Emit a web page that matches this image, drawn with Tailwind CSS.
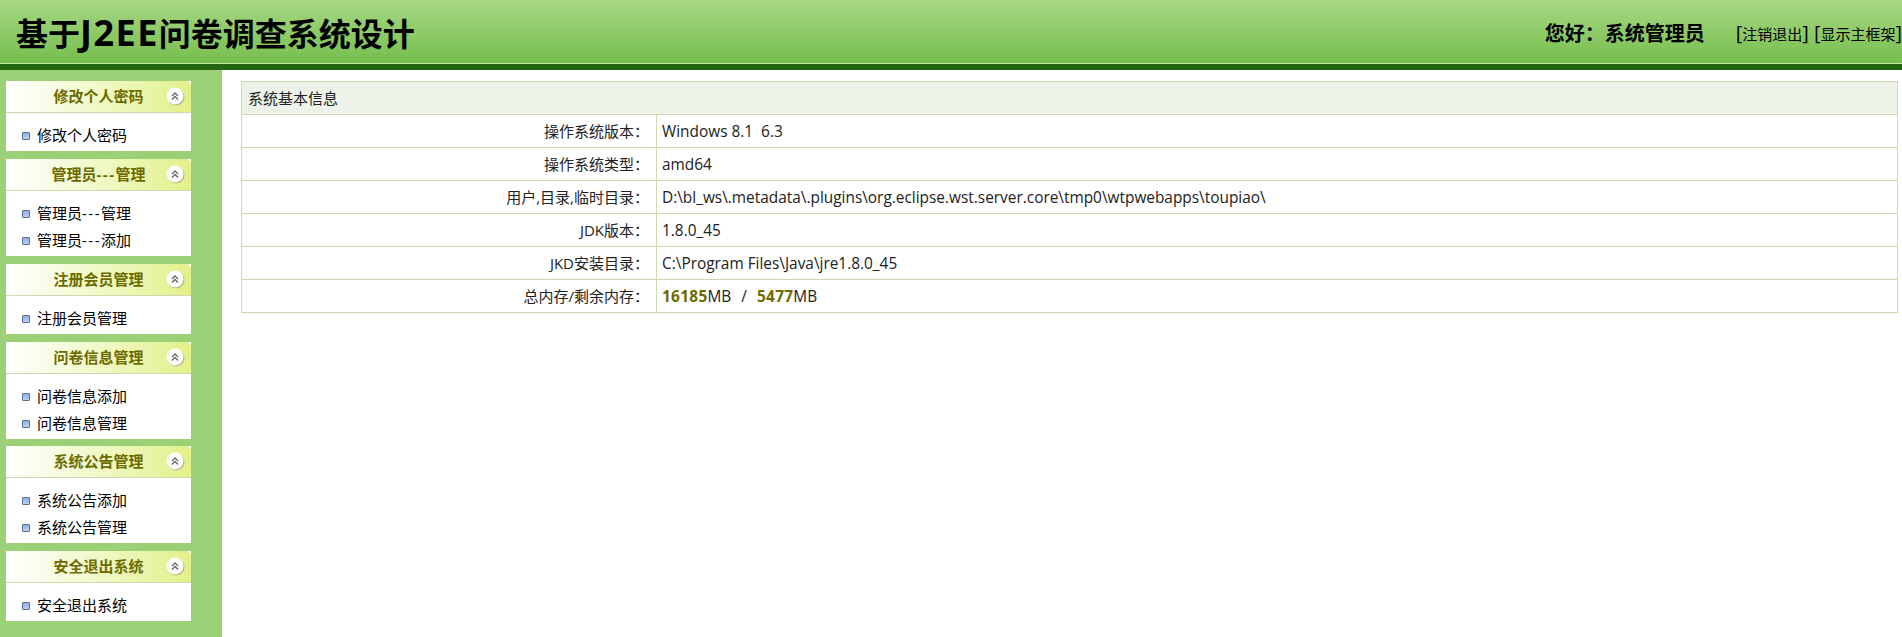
<!DOCTYPE html>
<html lang="zh-CN">
<head>
    <meta charset="UTF-8">
    <title>基于J2EE问卷调查系统设计</title>
    <script src="https://cdn.jsdelivr.net/npm/@tailwindcss/browser@4"></script>
</head>
<body class="h-[637px] overflow-hidden bg-white text-black font-['Open_Sans','Noto_Sans_CJK_SC',sans-serif]">
    <!-- 顶部 -->
    <header class="h-[70px] bg-gradient-to-b from-[#a6d782] to-[#76be4d] border-b-[6px] border-[#22640f] flex justify-between items-start relative">
        <h1 class="ml-4 mt-[9px] text-[32px] leading-[48px] font-bold whitespace-nowrap">基于<span class="text-[36px] tracking-[1.5px]">J2EE</span>问卷调查系统设计</h1>
        <div class="flex items-center mt-[19px]">
            <span class="text-[20px] leading-[28px] font-bold mr-[31px]">您好：系统管理员</span>
            <span class="text-[15px] leading-[28px] whitespace-nowrap"><span class="text-[20px]">[</span>注销退出<span class="text-[20px]">]</span><span class="ml-[5px] text-[20px]">[</span>显示主框架<span class="text-[20px]">]</span></span>
        </div>
        <div class="absolute left-0 right-0 bottom-0 h-[1px] bg-[#bfe6a0]"></div>
    </header>

    <div class="flex h-[567px]">
        <!-- 左侧菜单 -->
        <aside class="w-[222px] h-full bg-[#9cd076] pt-[11px] pl-[6px] flex flex-col">
            <div class="w-[185px] bg-white">
                <div class="h-[32px] rounded-t-[5px] border-b border-[#d0d8b0] bg-gradient-to-r from-white to-[#e3f088] relative flex items-center justify-center text-[15px] font-bold text-[#6b6b00]">
                    修改个人密码
                    <svg class="absolute right-[6px] top-[6px]" width="19" height="19" viewBox="0 0 19 19"><circle cx="10" cy="10" r="8.5" fill="#888" opacity=".55"/><circle cx="9" cy="9" r="8.5" fill="#fff"/><path d="M6 9 9 6 12 9M6 12.5 9 9.5 12 12.5" fill="none" stroke="#666" stroke-width="1.3"/></svg>
                </div>
                <ul class="pt-[9px] pb-[2px] text-[15px] leading-[27px]">
                    <li class="flex items-center pl-[16px]"><span class="w-[8px] h-[8px] rounded-[1px] border border-[#5f6f8a] bg-gradient-to-b from-[#8fb0ea] to-[#b8d0f8] mr-[7px]"></span>修改个人密码</li>
                </ul>
            </div>
            <div class="w-[185px] bg-white mt-[8px]">
                <div class="h-[32px] rounded-t-[5px] border-b border-[#d0d8b0] bg-gradient-to-r from-white to-[#e3f088] relative flex items-center justify-center text-[15px] font-bold text-[#6b6b00]">
                    <span>管理员<span class="tracking-[1.5px]">---</span>管理</span>
                    <svg class="absolute right-[6px] top-[6px]" width="19" height="19" viewBox="0 0 19 19"><circle cx="10" cy="10" r="8.5" fill="#888" opacity=".55"/><circle cx="9" cy="9" r="8.5" fill="#fff"/><path d="M6 9 9 6 12 9M6 12.5 9 9.5 12 12.5" fill="none" stroke="#666" stroke-width="1.3"/></svg>
                </div>
                <ul class="pt-[9px] pb-[2px] text-[15px] leading-[27px]">
                    <li class="flex items-center pl-[16px]"><span class="w-[8px] h-[8px] rounded-[1px] border border-[#5f6f8a] bg-gradient-to-b from-[#8fb0ea] to-[#b8d0f8] mr-[7px]"></span><span>管理员<span class="tracking-[1.5px]">---</span>管理</span></li>
                    <li class="flex items-center pl-[16px]"><span class="w-[8px] h-[8px] rounded-[1px] border border-[#5f6f8a] bg-gradient-to-b from-[#8fb0ea] to-[#b8d0f8] mr-[7px]"></span><span>管理员<span class="tracking-[1.5px]">---</span>添加</span></li>
                </ul>
            </div>
            <div class="w-[185px] bg-white mt-[8px]">
                <div class="h-[32px] rounded-t-[5px] border-b border-[#d0d8b0] bg-gradient-to-r from-white to-[#e3f088] relative flex items-center justify-center text-[15px] font-bold text-[#6b6b00]">
                    注册会员管理
                    <svg class="absolute right-[6px] top-[6px]" width="19" height="19" viewBox="0 0 19 19"><circle cx="10" cy="10" r="8.5" fill="#888" opacity=".55"/><circle cx="9" cy="9" r="8.5" fill="#fff"/><path d="M6 9 9 6 12 9M6 12.5 9 9.5 12 12.5" fill="none" stroke="#666" stroke-width="1.3"/></svg>
                </div>
                <ul class="pt-[9px] pb-[2px] text-[15px] leading-[27px]">
                    <li class="flex items-center pl-[16px]"><span class="w-[8px] h-[8px] rounded-[1px] border border-[#5f6f8a] bg-gradient-to-b from-[#8fb0ea] to-[#b8d0f8] mr-[7px]"></span>注册会员管理</li>
                </ul>
            </div>
            <div class="w-[185px] bg-white mt-[8px]">
                <div class="h-[32px] rounded-t-[5px] border-b border-[#d0d8b0] bg-gradient-to-r from-white to-[#e3f088] relative flex items-center justify-center text-[15px] font-bold text-[#6b6b00]">
                    问卷信息管理
                    <svg class="absolute right-[6px] top-[6px]" width="19" height="19" viewBox="0 0 19 19"><circle cx="10" cy="10" r="8.5" fill="#888" opacity=".55"/><circle cx="9" cy="9" r="8.5" fill="#fff"/><path d="M6 9 9 6 12 9M6 12.5 9 9.5 12 12.5" fill="none" stroke="#666" stroke-width="1.3"/></svg>
                </div>
                <ul class="pt-[9px] pb-[2px] text-[15px] leading-[27px]">
                    <li class="flex items-center pl-[16px]"><span class="w-[8px] h-[8px] rounded-[1px] border border-[#5f6f8a] bg-gradient-to-b from-[#8fb0ea] to-[#b8d0f8] mr-[7px]"></span>问卷信息添加</li>
                    <li class="flex items-center pl-[16px]"><span class="w-[8px] h-[8px] rounded-[1px] border border-[#5f6f8a] bg-gradient-to-b from-[#8fb0ea] to-[#b8d0f8] mr-[7px]"></span>问卷信息管理</li>
                </ul>
            </div>
            <div class="w-[185px] bg-white mt-[7px]">
                <div class="h-[32px] rounded-t-[5px] border-b border-[#d0d8b0] bg-gradient-to-r from-white to-[#e3f088] relative flex items-center justify-center text-[15px] font-bold text-[#6b6b00]">
                    系统公告管理
                    <svg class="absolute right-[6px] top-[6px]" width="19" height="19" viewBox="0 0 19 19"><circle cx="10" cy="10" r="8.5" fill="#888" opacity=".55"/><circle cx="9" cy="9" r="8.5" fill="#fff"/><path d="M6 9 9 6 12 9M6 12.5 9 9.5 12 12.5" fill="none" stroke="#666" stroke-width="1.3"/></svg>
                </div>
                <ul class="pt-[9px] pb-[2px] text-[15px] leading-[27px]">
                    <li class="flex items-center pl-[16px]"><span class="w-[8px] h-[8px] rounded-[1px] border border-[#5f6f8a] bg-gradient-to-b from-[#8fb0ea] to-[#b8d0f8] mr-[7px]"></span>系统公告添加</li>
                    <li class="flex items-center pl-[16px]"><span class="w-[8px] h-[8px] rounded-[1px] border border-[#5f6f8a] bg-gradient-to-b from-[#8fb0ea] to-[#b8d0f8] mr-[7px]"></span>系统公告管理</li>
                </ul>
            </div>
            <div class="w-[185px] bg-white mt-[8px]">
                <div class="h-[32px] rounded-t-[5px] border-b border-[#d0d8b0] bg-gradient-to-r from-white to-[#e3f088] relative flex items-center justify-center text-[15px] font-bold text-[#6b6b00]">
                    安全退出系统
                    <svg class="absolute right-[6px] top-[6px]" width="19" height="19" viewBox="0 0 19 19"><circle cx="10" cy="10" r="8.5" fill="#888" opacity=".55"/><circle cx="9" cy="9" r="8.5" fill="#fff"/><path d="M6 9 9 6 12 9M6 12.5 9 9.5 12 12.5" fill="none" stroke="#666" stroke-width="1.3"/></svg>
                </div>
                <ul class="pt-[9px] pb-[2px] text-[15px] leading-[27px]">
                    <li class="flex items-center pl-[16px]"><span class="w-[8px] h-[8px] rounded-[1px] border border-[#5f6f8a] bg-gradient-to-b from-[#8fb0ea] to-[#b8d0f8] mr-[7px]"></span>安全退出系统</li>
                </ul>
            </div>
        </aside>

        <!-- 系统基本信息 -->
        <main class="flex-1 pt-[11px] pl-[19px] pr-[4px]">
            <table class="w-full border-collapse text-[15px] text-[#222]">
                <tbody>
                    <tr class="h-[33px]"><th colspan="2" class="border border-[#cfd8b0] bg-[#eef3e9] text-left font-normal pl-[6px]">系统基本信息</th></tr>
                    <tr class="h-[33px]"><td class="w-[415px] border border-[#cfd8b0] text-right pr-[7px]">操作系统版本：</td><td class="border border-[#cfd8b0] pl-[5px] pt-[1px] text-[15.4px]">Windows 8.1&nbsp; 6.3</td></tr>
                    <tr class="h-[33px]"><td class="border border-[#cfd8b0] text-right pr-[7px]">操作系统类型：</td><td class="border border-[#cfd8b0] pl-[5px] pt-[1px] text-[15.4px]">amd64</td></tr>
                    <tr class="h-[33px]"><td class="border border-[#cfd8b0] text-right pr-[7px]">用户,目录,临时目录：</td><td class="border border-[#cfd8b0] pl-[5px] pt-[1px] text-[15.4px]">D:\bl_ws\.metadata\.plugins\org.eclipse.wst.server.core\tmp0\wtpwebapps\toupiao\</td></tr>
                    <tr class="h-[33px]"><td class="border border-[#cfd8b0] text-right pr-[7px]">JDK版本：</td><td class="border border-[#cfd8b0] pl-[5px] pt-[1px] text-[15.4px]">1.8.0_45</td></tr>
                    <tr class="h-[33px]"><td class="border border-[#cfd8b0] text-right pr-[7px]">JKD安装目录：</td><td class="border border-[#cfd8b0] pl-[5px] pt-[1px] text-[15.4px]">C:\Program Files\Java\jre1.8.0_45</td></tr>
                    <tr class="h-[33px]"><td class="border border-[#cfd8b0] text-right pr-[7px]">总内存/剩余内存：</td><td class="border border-[#cfd8b0] pl-[5px] pt-[1px] text-[15.4px]"><b class="text-[#6b6b00] tracking-[0.3px]">16185</b>MB &nbsp;<span class="px-[2px]">/</span>&nbsp; <b class="text-[#6b6b00] tracking-[0.3px]">5477</b>MB</td></tr>
                </tbody>
            </table>
        </main>
    </div>
</body>
</html>
